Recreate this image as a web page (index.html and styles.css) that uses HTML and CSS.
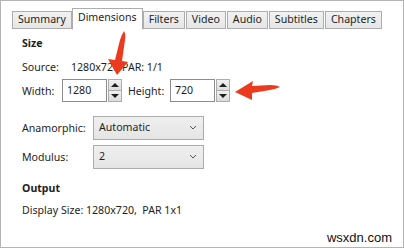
FILE: index.html
```html
<!DOCTYPE html>
<html>
<head>
  <title>Dimensions</title>
  <link rel="stylesheet" href="styles.css">
</head>
<body>
  <div class="window">
    <div class="tabs">
      <div class="tab">Summary</div>
      <div class="tab active">Dimensions</div>
      <div class="tab">Filters</div>
      <div class="tab">Video</div>
      <div class="tab">Audio</div>
      <div class="tab">Subtitles</div>
      <div class="tab">Chapters</div>
    </div>

    <div class="panel">
      <h3 class="heading">Size</h3>
      <div class="source">
        <span class="source-label">Source:</span>
        <span class="source-value">1280x720</span>
        <span class="source-par">PAR: 1/1</span>
      </div>

      <div class="size-row">
        <span class="size-label">Width:</span>
        <div class="spin">
          <div class="spin-input">1280</div>
          <div class="spin-buttons">
            <div class="spin-btn"><span class="tri-up"></span></div>
            <div class="spin-btn"><span class="tri-down"></span></div>
          </div>
        </div>
        <span class="size-label height-label">Height:</span>
        <div class="spin">
          <div class="spin-input">720</div>
          <div class="spin-buttons">
            <div class="spin-btn"><span class="tri-up"></span></div>
            <div class="spin-btn"><span class="tri-down"></span></div>
          </div>
        </div>
      </div>

      <div class="combo-row first">
        <span class="combo-label">Anamorphic:</span>
        <div class="combo">
          <span>Automatic</span>
          <svg class="chevron" width="8" height="5" viewBox="0 0 8 5"><path d="M1 1 L4 4 L7 1" fill="none" stroke="#555" stroke-width="1"/></svg>
        </div>
      </div>
      <div class="combo-row">
        <span class="combo-label">Modulus:</span>
        <div class="combo">
          <span>2</span>
          <svg class="chevron" width="8" height="5" viewBox="0 0 8 5"><path d="M1 1 L4 4 L7 1" fill="none" stroke="#555" stroke-width="1"/></svg>
        </div>
      </div>

      <h3 class="heading output">Output</h3>
      <p class="display">Display Size: 1280x720,&nbsp; PAR 1x1</p>
    </div>

    <div class="watermark">wsxdn.com</div>

    <!-- red callout arrows drawn over the dialog -->
    <svg class="arrows" width="404" height="248" viewBox="0 0 404 248">
      <path d="M124 31 Q126 34 125 40 L122 61 L128 62 L117 75 L108 59 L115 60 L120 40 Q122 34 124 31 Z" fill="#ec3a1f"/>
      <path d="M235 92 L253 81 L252 86 L270 85 Q277 85 280 87 Q276 89 270 90 L252 93 L252 100 Z" fill="#ec3a1f"/>
    </svg>
  </div>
</body>
</html>
```

FILE: styles.css
```css
body {
  margin: 0;
  padding: 0;
  background: #fff;
  font-family: "Noto Sans", "Open Sans", sans-serif;
  font-size: 10.6px;
  color: #1e1e1e;
}

.window {
  position: relative;
  width: 402px;
  height: 246px;
  border: 1px solid #b4b4b4;
  overflow: hidden;
}

.tabs {
  display: flex;
  align-items: flex-end;
  padding: 8px 0 0 11px;
  height: 20px;
}

.tab {
  height: 16px;
  line-height: 15px;
  padding: 0 5px;
  margin-right: 1px;
  border: 1px solid #adadad;
  background: linear-gradient(#f2f2f2, #e6e6e6);
  color: #1e1e1e;
}

.tab.active {
  height: 20px;
  line-height: 17px;
  background: #fff;
  border-bottom-color: #fff;
  padding: 0 5px;
  margin: 0 0 -1px -1px;
}

.panel {
  padding-left: 21px;
}

.heading {
  margin: 7px 0 0 0;
  font-size: 10.6px;
  font-weight: bold;
  line-height: 14px;
}

.source {
  display: flex;
  margin-top: 10px;
  line-height: 14px;
}

.source-label {
  width: 49px;
}

.source-value {
  width: 51px;
}

.size-row {
  display: flex;
  align-items: center;
  margin-top: 5px;
}

.size-label {
  width: 40px;
}

.height-label {
  width: 42px;
  margin-left: 6px;
}

.spin {
  display: flex;
  height: 23px;
}

.spin-input {
  width: 39px;
  height: 21px;
  line-height: 21px;
  padding-left: 4px;
  border: 1px solid #8c8c8c;
  background: #fff;
}

.spin-buttons {
  display: flex;
  flex-direction: column;
  width: 14px;
  margin-left: 1px;
}

.spin-btn {
  flex: 1;
  display: flex;
  align-items: center;
  justify-content: center;
  border: 1px solid #acacac;
  background: linear-gradient(#f0f0f0, #dcdcdc);
}

.spin-btn + .spin-btn {
  border-top: none;
}

.tri-up {
  border-left: 4px solid transparent;
  border-right: 4px solid transparent;
  border-bottom: 4px solid #1e1e1e;
}

.tri-down {
  border-left: 4px solid transparent;
  border-right: 4px solid transparent;
  border-top: 4px solid #1e1e1e;
}

.combo-row {
  display: flex;
  align-items: center;
  margin-top: 5px;
}

.combo-row.first {
  margin-top: 14px;
}

.combo-label {
  width: 71px;
}

.combo {
  display: flex;
  align-items: center;
  justify-content: space-between;
  width: 98px;
  height: 20px;
  padding: 0 6px 2px 5px;
  border: 1px solid #acacac;
  background: linear-gradient(#efefef, #e5e5e5);
}

.output {
  margin-top: 12px;
}

.display {
  margin: 8px 0 0 0;
  line-height: 14px;
}

.watermark {
  position: absolute;
  right: 11px;
  bottom: 2px;
  font-family: "Liberation Sans", Arial, sans-serif;
  font-size: 13px;
  color: #111;
}

.arrows {
  position: absolute;
  left: -1px;
  top: -1px;
}
```
